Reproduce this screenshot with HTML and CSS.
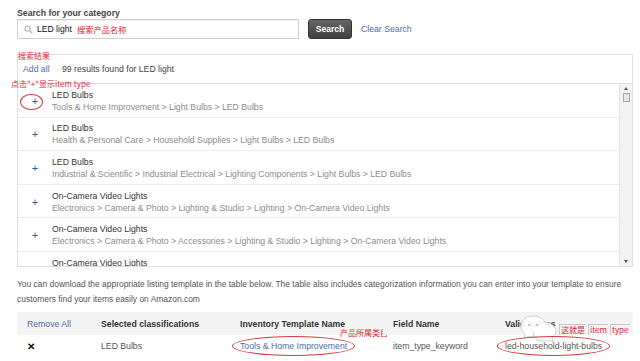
FILE: index.html
```html
<!DOCTYPE html>
<html lang="en">

<head>
    <meta charset="UTF-8">
    <title>Search for your category</title>
    <link rel="stylesheet" href="styles.css">
</head>

<body>
    <div class="page">
        <div class="search-label">Search for your category</div>
        <div class="search-row">
            <div class="search-input">
                <svg class="lens" width="9" height="9" viewBox="0 0 9 9">
                    <circle cx="3.6" cy="3.6" r="2.6" fill="none" stroke="#b5b5b5" stroke-width="1.1"/>
                    <path d="M5.5 5.5 L8.2 8.2" stroke="#b5b5b5" stroke-width="1.4"/>
                </svg>
                <span class="query">LED light</span>
                <span class="note">搜索产品名称</span>
            </div>
            <button class="search-btn">Search</button>
            <a class="link clear">Clear Search</a>
        </div>

        <div class="results">
            <span class="note note-results">搜索结果</span>
            <div class="results-head">
                <a class="link">Add all</a>
                <span>99 results found for LED light</span>
            </div>
            <span class="note note-click">点击"+"显示item type</span>
            <div class="results-list">
                <div class="rows">
                    <div class="row">
                        <span class="plus circled">+</span>
                        <div class="row-text">
                            <div class="title">LED Bulbs</div>
                            <div class="path">Tools &amp; Home Improvement &gt; Light Bulbs &gt; LED Bulbs</div>
                        </div>
                    </div>
                    <div class="row">
                        <span class="plus">+</span>
                        <div class="row-text">
                            <div class="title">LED Bulbs</div>
                            <div class="path">Health &amp; Personal Care &gt; Household Supplies &gt; Light Bulbs &gt; LED Bulbs</div>
                        </div>
                    </div>
                    <div class="row">
                        <span class="plus">+</span>
                        <div class="row-text">
                            <div class="title">LED Bulbs</div>
                            <div class="path">Industrial &amp; Scientific &gt; Industrial Electrical &gt; Lighting Components &gt; Light Bulbs &gt; LED Bulbs</div>
                        </div>
                    </div>
                    <div class="row">
                        <span class="plus">+</span>
                        <div class="row-text">
                            <div class="title">On-Camera Video Lights</div>
                            <div class="path">Electronics &gt; Camera &amp; Photo &gt; Lighting &amp; Studio &gt; Lighting &gt; On-Camera Video Lights</div>
                        </div>
                    </div>
                    <div class="row">
                        <span class="plus">+</span>
                        <div class="row-text">
                            <div class="title">On-Camera Video Lights</div>
                            <div class="path">Electronics &gt; Camera &amp; Photo &gt; Accessories &gt; Lighting &amp; Studio &gt; Lighting &gt; On-Camera Video Lights</div>
                        </div>
                    </div>
                    <div class="row">
                        <span class="plus">+</span>
                        <div class="row-text">
                            <div class="title">On-Camera Video Lights</div>
                            <div class="path">Electronics &gt; Camera &amp; Photo &gt; Lighting &amp; Studio &gt; Lighting &gt; On-Camera Video Lights</div>
                        </div>
                    </div>
                </div>
                <div class="scrollbar">
                    <span class="arrow up"></span>
                    <span class="thumb"></span>
                    <span class="track"></span>
                    <span class="arrow down"></span>
                </div>
            </div>
        </div>

        <p class="info">You can download the appropriate listing template in the table below. The table also includes categorization information you can enter into your template to ensure customers find your items easily on Amazon.com</p>

        <table class="selected">
            <colgroup>
                <col class="c1">
                <col class="c2">
                <col class="c3">
                <col class="c4">
                <col class="c5">
            </colgroup>
            <thead>
                <tr>
                    <th><a class="link plain">Remove All</a></th>
                    <th>Selected classifications</th>
                    <th>Inventory Template Name<span class="note note-category">产品所属类目</span></th>
                    <th>Field Name</th>
                    <th class="valid">Valid Values
                        <svg class="watermark" width="40" height="30" viewBox="0 0 40 30">
                            <path d="M14 3 C6 3 2 8 2 13 C2 17 4 19 6 21 L5 26 L10 23 C12 24 13 24 14 24 C22 24 27 19 27 13 C27 8 22 3 14 3 Z" fill="rgba(255,255,255,0.92)" stroke="#cfcfcf" stroke-width="1"/>
                            <path d="M24 9 C31 9 37 13 37 18 C37 21 35 23 33 25 L34 29 L30 27 C28 28 26 28 24 28 C18 28 14 24 14 19" fill="rgba(255,255,255,0.9)" stroke="#cfcfcf" stroke-width="1"/>
                            <circle cx="10" cy="12" r="1.3" fill="#c8c8c8"/>
                            <circle cx="18" cy="12" r="1.3" fill="#c8c8c8"/>
                        </svg>
                        <span class="note note-type"><span class="box">这就是</span><span class="box">item</span> <span class="box">type</span></span>
                    </th>
                </tr>
            </thead>
            <tbody>
                <tr>
                    <td class="remove">&#x2715;</td>
                    <td>LED Bulbs</td>
                    <td><a class="link plain circled-text">Tools &amp; Home Improvement</a></td>
                    <td>item_type_keyword</td>
                    <td><span class="circled-text">led-household-light-bulbs</span></td>
                </tr>
            </tbody>
        </table>
    </div>
</body>

</html>
```

FILE: styles.css
```css
body {
    margin: 0;
    background: #ffffff;
    font-family: "Liberation Sans", Arial, "Noto Sans CJK SC", sans-serif;
    font-size: 8.7px;
    color: #333333;
}

.page {
    padding: 7px 7px 0 17px;
}

.search-label {
    font-weight: bold;
    font-size: 8.7px;
    line-height: 12px;
    color: #444444;
}

.search-row {
    display: flex;
    align-items: center;
    height: 20px;
}

.search-input {
    box-sizing: border-box;
    width: 282px;
    height: 20px;
    border: 1px solid #cfcfcf;
    box-shadow: inset 0 1px 1px rgba(0, 0, 0, 0.06);
    display: flex;
    align-items: center;
    padding-left: 6px;
}

.lens {
    margin-right: 4px;
}

.query {
    color: #111111;
    font-size: 8.6px;
}

.note {
    color: #e0242f;
    font-family: "Noto Sans CJK SC", "Liberation Sans", sans-serif;
    font-size: 8px;
    line-height: 10px;
}

.search-input .note {
    margin-left: 5px;
    font-size: 8.3px;
}

.search-btn {
    margin-left: 9px;
    width: 44px;
    height: 20px;
    border: 1px solid #333333;
    border-radius: 3px;
    background: linear-gradient(#666666, #404040);
    color: #ffffff;
    font-family: "Liberation Sans", Arial, sans-serif;
    font-weight: bold;
    font-size: 8.6px;
    padding: 0;
}

.link {
    color: #4a70a6;
    text-decoration: none;
}

.clear {
    margin-left: 9px;
}

.results {
    position: relative;
    margin-top: 15px;
    width: 616px;
    box-sizing: border-box;
    border: 1px solid #dedede;
}

.results-head {
    padding: 8px 0 8px 5px;
    line-height: 12px;
    border-bottom: 1px solid #dedede;
    color: #444444;
}

.results-head .link {
    margin-right: 10px;
}

.note-results {
    position: absolute;
    left: 0;
    top: -4px;
    background: rgba(255, 255, 255, 0.6);
}

.note-click {
    position: absolute;
    left: -7px;
    top: 24px;
}

.results-list {
    display: flex;
    height: 182px;
    overflow: hidden;
}

.rows {
    flex: 1;
}

.row {
    display: flex;
    align-items: center;
    height: 33.6px;
    box-sizing: border-box;
    border-bottom: 1px solid #ececec;
    padding-top: 1px;
}

.plus {
    position: relative;
    width: 34px;
    text-align: center;
    color: #2a5a95;
    font-size: 11px;
}

.circled::after {
    content: "";
    position: absolute;
    left: 2px;
    top: -1px;
    width: 21px;
    height: 14px;
    border: 1px solid #d43a44;
    border-radius: 50%;
}

.title {
    line-height: 12px;
    color: #333333;
}

.path {
    line-height: 12px;
    color: #8c8c8c;
}

.scrollbar {
    width: 13px;
    background: #f3f3f3;
    border-left: 1px solid #e3e3e3;
    display: flex;
    flex-direction: column;
    align-items: center;
    padding: 3px 0;
    box-sizing: border-box;
}

.arrow {
    width: 0;
    height: 0;
    border-left: 2px solid transparent;
    border-right: 2px solid transparent;
}

.arrow.up {
    border-bottom: 3px solid #555555;
}

.arrow.down {
    border-top: 3px solid #555555;
}

.thumb {
    margin-top: 3px;
    width: 7px;
    height: 9px;
    box-sizing: border-box;
    border: 1px solid #a9a9a9;
    background: #e6e6e6;
}

.track {
    flex: 1;
}

.info {
    margin: 10px 0 5px;
    width: 616px;
    line-height: 15px;
    color: #555555;
    font-size: 8.45px;
}

.selected {
    width: 616px;
    border-collapse: collapse;
    table-layout: fixed;
}

.c1 { width: 74px; }
.c2 { width: 139px; }
.c3 { width: 153px; }
.c4 { width: 112px; }
.c5 { width: 138px; }

.selected th,
.selected td {
    text-align: left;
    padding: 0 0 0 10px;
    white-space: nowrap;
}

.selected th {
    height: 23px;
    background: #f4f4f4;
    font-weight: bold;
    color: #333333;
    position: relative;
}

.selected th .plain {
    font-weight: normal;
}

.selected td {
    height: 22px;
    color: #555555;
    position: relative;
}

.selected td.remove {
    color: #111111;
    font-size: 10px;
    font-weight: bold;
}

.circled-text {
    position: relative;
}

.circled-text::after {
    content: "";
    position: absolute;
    left: -8px;
    right: -8px;
    top: -5px;
    bottom: -5px;
    border: 1px solid #d43a44;
    border-radius: 50%;
}

.note-category {
    position: absolute;
    left: 110px;
    top: 16px;
    font-weight: normal;
}

.watermark {
    position: absolute;
    left: 24px;
    top: 1px;
}

.note-type {
    position: absolute;
    left: 64px;
    top: 12px;
    font-weight: normal;
    display: flex;
    gap: 2px;
}

.note-type .box {
    border-left: 1px solid #c8c8c8;
    border-top: 1px solid #c8c8c8;
    padding: 0 1px;
}
```
